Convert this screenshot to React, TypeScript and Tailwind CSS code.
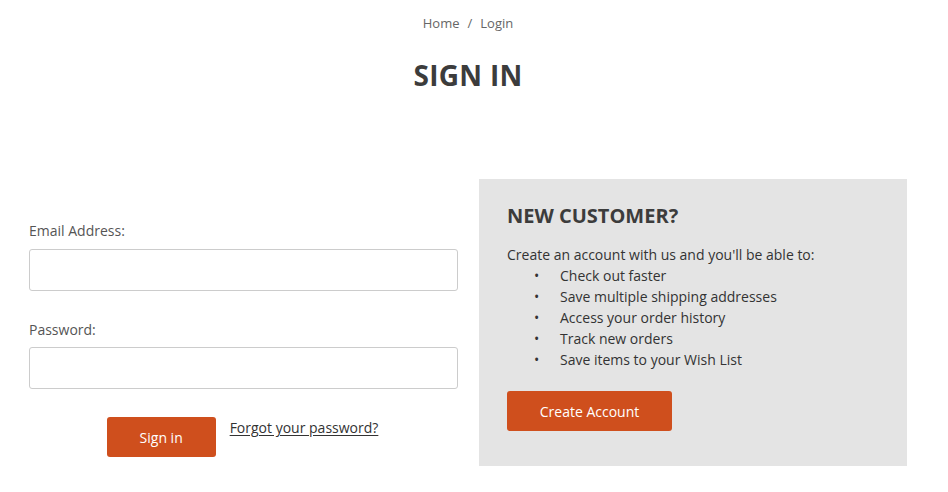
import React from "react";

export default function App() {
  const items = [
    "Check out faster",
    "Save multiple shipping addresses",
    "Access your order history",
    "Track new orders",
    "Save items to your Wish List",
  ];
  return (
    <div className="w-[948px] h-[492px] bg-white text-[#333] font-['Open_Sans',sans-serif] overflow-hidden">
      <div className="pr-[12px]">
        <div className="flex justify-center pt-[13px] text-[13px] leading-[20px] text-[#666]">
          <span>Home</span>
          <span className="mx-[8px]">/</span>
          <span>Login</span>
        </div>
        <h1 className="mt-[32px] text-center text-[28px] leading-[20px] font-bold text-[#3c3c3c] tracking-[0.3px]">
          SIGN IN
        </h1>
      </div>
      <div className="grid grid-cols-[429px_428px] gap-[21px] pl-[29px] mt-[94px]">
        <div className="pt-[42px]">
          <label className="block text-[14px] leading-[20px] text-[#555]">Email Address:</label>
          <div className="mt-[8px] h-[42px] rounded-[3px] border border-[#cccccc] bg-white" />
          <label className="block mt-[29px] text-[14px] leading-[20px] text-[#555]">Password:</label>
          <div className="mt-[7px] h-[42px] rounded-[3px] border border-[#cccccc] bg-white" />
          <div className="flex justify-center items-start gap-[14px] mt-[28px] pr-[2px]">
            <button className="w-[109px] h-[40px] rounded-[3px] bg-[#cf4f1d] text-white text-[14px]">
              Sign in
            </button>
            <a className="mt-[1px] text-[14px] leading-[20px] text-[#333] underline underline-offset-2">
              Forgot your password?
            </a>
          </div>
        </div>
        <div className="bg-[#e4e4e4] h-[287px] pl-[28px] pt-[24px]">
          <h2 className="text-[20px] leading-[26px] font-bold text-[#3c3c3c]">NEW CUSTOMER?</h2>
          <p className="mt-[15px] text-[14px] leading-[21px] text-[#333]">
            Create an account with us and you'll be able to:
          </p>
          <ul className="text-[14px] leading-[21px] text-[#333]">
            {items.map((t) => (
              <li key={t} className="flex">
                <span className="w-[53px] pl-[27px]">•</span>
                <span>{t}</span>
              </li>
            ))}
          </ul>
          <button className="mt-[21px] w-[165px] h-[40px] rounded-[3px] bg-[#cf4f1d] text-white text-[14px]">
            Create Account
          </button>
        </div>
      </div>
    </div>
  );
}
